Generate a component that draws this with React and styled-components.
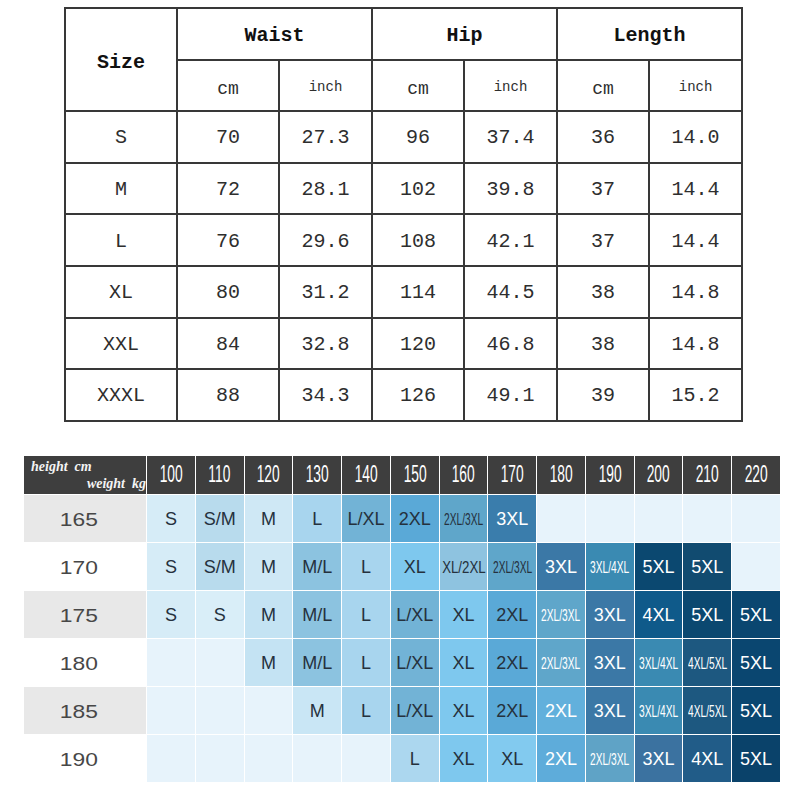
import React from 'react';
import styled, { createGlobalStyle } from 'styled-components';

const GlobalStyle = createGlobalStyle`
  html, body { margin: 0; padding: 0; background: #fff; }
  body { width: 800px; height: 800px; overflow: hidden; }
`;

const Page = styled.div`
  width: 800px;
  height: 800px;
  box-sizing: border-box;
  padding-top: 7px;
  display: flex;
  flex-direction: column;
`;

const SizeTable = styled.table`
  margin-left: 64px;
  border-collapse: collapse;
  table-layout: fixed;
  width: 678px;
  font-family: "Liberation Mono", "DejaVu Sans Mono", monospace;
  color: #2a2a2a;
`;

const Cell = styled.td`
  box-sizing: border-box;
  border: 2px solid #383838;
  padding: 0;
  padding-top: ${(p) => p.$pt ?? 3}px;
  height: 51.6px;
  line-height: 20px;
  text-align: center;
  vertical-align: middle;
  font-size: ${(p) => p.$size || 20}px;
  font-weight: ${(p) => (p.$bold ? 700 : 400)};
  color: ${(p) => (p.$bold ? '#111' : '#2e2e2e')};
`;

const Chart = styled.div`
  margin-top: 34px;
  margin-left: 24px;
  width: 756px;
  display: grid;
  grid-template-columns: 122px repeat(13, minmax(0, 1fr));
  grid-template-rows: 38px repeat(6, 47px);
  gap: 1px;
  background: #fff;
  font-family: "Liberation Sans", Arial, sans-serif;
`;

const Corner = styled.div`
  background: #3e3e3e;
  display: flex;
  flex-direction: column;
  justify-content: space-between;
  padding: 3px 0 3px 7px;
  font-family: "Liberation Serif", "Times New Roman", serif;
  font-style: italic;
  font-weight: 700;
  font-size: 14px;
  color: #f4f4f4;
  line-height: 15px;
`;

const CornerTop = styled.span`
  align-self: flex-start;
`;

const CornerBottom = styled.span`
  align-self: flex-end;
`;

const HeadCell = styled.div`
  background: #3e3e3e;
  color: #fff;
  display: flex;
  align-items: center;
  justify-content: center;
  overflow: hidden;
  font-size: 23px;
`;

const Squeeze = styled.span`
  display: inline-block;
  transform: scaleX(${(p) => p.$sx || 1});
  white-space: nowrap;
`;

const RowLabel = styled.div`
  background: ${(p) => (p.$shade ? '#e8e8e8' : '#fff')};
  color: #474747;
  display: flex;
  align-items: center;
  justify-content: center;
  padding: 4px 12px 0 0;
  font-size: 19px;
`;

const SizeCell = styled.div`
  background: ${(p) => p.$bg};
  color: ${(p) => (p.$light ? '#fff' : '#25313d')};
  display: flex;
  align-items: center;
  justify-content: center;
  overflow: visible;
  min-width: 0;
  padding-top: 3px;
  font-size: ${(p) => (p.$sx ? 17 : 18)}px;
`;

const tableRows = [
  ['S', '70', '27.3', '96', '37.4', '36', '14.0'],
  ['M', '72', '28.1', '102', '39.8', '37', '14.4'],
  ['L', '76', '29.6', '108', '42.1', '37', '14.4'],
  ['XL', '80', '31.2', '114', '44.5', '38', '14.8'],
  ['XXL', '84', '32.8', '120', '46.8', '38', '14.8'],
  ['XXXL', '88', '34.3', '126', '49.1', '39', '15.2'],
];

const E = '#e7f3fb';
const c = {
  s: '#d6ecf7',
  sm: '#b8dbed',
  m: '#cfe8f5',
  m2: '#c4e3f3',
  l: '#a8d5ee',
  ml: '#8cc3e0',
  lxl: '#72b3d6',
  xl: '#7ec8ee',
  xl2: '#8ec3e0',
  x2: '#5aa9d7',
  x23: '#5fa6ca',
  x3: '#3b78a6',
  x34: '#3a8ab2',
  x4: '#0f5a8a',
  x45: '#1d5880',
  x5: '#0b4870',
  x5b: '#0a4670',
};

const e = ['', E];
const heights = [100, 110, 120, 130, 140, 150, 160, 170, 180, 190, 200, 210, 220];

const chartRows = [
  {
    w: 165,
    cells: [
      ['S', c.s], ['S/M', c.sm], ['M', c.m], ['L', c.l], ['L/XL', c.lxl], ['2XL', c.x2],
      ['2XL/3XL', c.x23, 0, 0.6], ['3XL', '#3a7dac', 1], e, e, e, e, e,
    ],
  },
  {
    w: 170,
    cells: [
      ['S', c.s], ['S/M', c.sm], ['M', c.m], ['M/L', c.ml], ['L', c.l], ['XL', c.xl],
      ['XL/2XL', c.xl2, 0, 0.78], ['2XL/3XL', c.x23, 0, 0.6], ['3XL', c.x3, 1],
      ['3XL/4XL', c.x34, 1, 0.6], ['5XL', c.x5, 1], ['5XL', '#114b70', 1], e,
    ],
  },
  {
    w: 175,
    cells: [
      ['S', c.s], ['S', '#d9eef8'], ['M', c.m2], ['M/L', c.ml], ['L', c.l], ['L/XL', c.lxl],
      ['XL', c.xl], ['2XL', c.x2], ['2XL/3XL', c.x23, 1, 0.6], ['3XL', c.x3, 1],
      ['4XL', c.x4, 1], ['5XL', c.x5, 1], ['5XL', c.x5b, 1],
    ],
  },
  {
    w: 180,
    cells: [
      e, e, ['M', c.m2], ['M/L', c.ml], ['L', c.l], ['L/XL', c.lxl], ['XL', c.xl], ['2XL', c.x2],
      ['2XL/3XL', c.x23, 1, 0.6], ['3XL', c.x3, 1], ['3XL/4XL', c.x34, 1, 0.6],
      ['4XL/5XL', c.x45, 1, 0.6], ['5XL', c.x5b, 1],
    ],
  },
  {
    w: 185,
    cells: [
      e, e, e, ['M', '#c9e6f5'], ['L', c.l], ['L/XL', c.lxl], ['XL', c.xl], ['2XL', c.x2],
      ['2XL', '#62b0dc', 1], ['3XL', c.x3, 1], ['3XL/4XL', c.x34, 1, 0.6],
      ['4XL/5XL', c.x45, 1, 0.6], ['5XL', c.x5b, 1],
    ],
  },
  {
    w: 190,
    cells: [
      e, e, e, e, e, ['L', '#acd7ef'], ['XL', c.xl], ['XL', '#82caef'], ['2XL', '#5eacda', 1],
      ['2XL/3XL', '#5fa3c6', 1, 0.6], ['3XL', '#3b72a0', 1], ['4XL', '#215c88', 1],
      ['5XL', '#0a426a', 1],
    ],
  },
];

export default function App() {
  return (
    <Page>
      <GlobalStyle />
      <SizeTable>
        <colgroup>
          <col style={{ width: 112 }} />
          <col style={{ width: 102 }} />
          <col style={{ width: 93 }} />
          <col style={{ width: 92 }} />
          <col style={{ width: 93 }} />
          <col style={{ width: 92 }} />
          <col style={{ width: 93 }} />
        </colgroup>
        <tbody>
          <tr>
            <Cell rowSpan={2} $bold $pt={6}>Size</Cell>
            <Cell colSpan={2} $bold $pt={4}>Waist</Cell>
            <Cell colSpan={2} $bold $pt={4}>Hip</Cell>
            <Cell colSpan={2} $bold $pt={4}>Length</Cell>
          </tr>
          <tr>
            <Cell $size={18} $pt={8}>cm</Cell>
            <Cell $size={14} $pt={3}>inch</Cell>
            <Cell $size={18} $pt={8}>cm</Cell>
            <Cell $size={14} $pt={3}>inch</Cell>
            <Cell $size={18} $pt={8}>cm</Cell>
            <Cell $size={14} $pt={3}>inch</Cell>
          </tr>
          {tableRows.map((r) => (
            <tr key={r[0]}>
              {r.map((v, i) => (
                <Cell key={i}>{v}</Cell>
              ))}
            </tr>
          ))}
        </tbody>
      </SizeTable>

      <Chart>
        <Corner>
          <CornerTop>height&nbsp;&nbsp;cm</CornerTop>
          <CornerBottom>weight&nbsp;&nbsp;kg</CornerBottom>
        </Corner>
        {heights.map((h) => (
          <HeadCell key={h}>
            <Squeeze $sx={0.6}>{h}</Squeeze>
          </HeadCell>
        ))}
        {chartRows.map((row, ri) => (
          <React.Fragment key={row.w}>
            <RowLabel $shade={ri % 2 === 0}>
              <Squeeze $sx={1.2}>{row.w}</Squeeze>
            </RowLabel>
            {row.cells.map((cell, ci) => (
              <SizeCell key={ci} $bg={cell[1]} $light={!!cell[2]} $sx={cell[3]}>
                {cell[3] ? <Squeeze $sx={cell[3]}>{cell[0]}</Squeeze> : cell[0]}
              </SizeCell>
            ))}
          </React.Fragment>
        ))}
      </Chart>
    </Page>
  );
}
